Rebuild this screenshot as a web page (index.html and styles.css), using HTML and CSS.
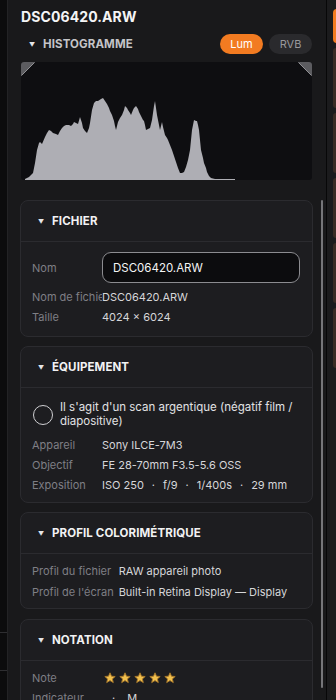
FILE: index.html
```html
<!DOCTYPE html>
<html lang="fr">
<head>
<meta charset="utf-8">
<link rel="stylesheet" href="styles.css">
</head>
<body>
<div class="app">
  <div class="left-strip">
    <div class="ls-line ls-line-a"></div>
    <div class="ls-line ls-line-b"></div>
  </div>
  <main class="panel">
    <h1 class="title">DSC06420.ARW</h1>
    <div class="hist-head">
      <span class="caret">▼</span>
      <span class="hist-label">HISTOGRAMME</span>
      <div class="seg">
        <button class="seg-btn active">Lum</button>
        <button class="seg-btn">RVB</button>
      </div>
    </div>
    <div class="hist">
      <svg class="hist-svg" width="291" height="118" viewBox="21 62 291 118">
        <polygon fill="#aeaeb4" points="25,179 29,177 33,173 35,163 37,150 39,143 40,142 42,144 45,137 47,133 49,130 51,131 53,133 56,134 58,135 60,131 62,128 64,126 66,125 69,125 71,126 73,124 74,122 76,123 78,124 80,117 82,123 83,128 85,131 87,133 89,128 90,123 92,110 94,103 96,101 98,101 101,99 103,98 105,101 107,104 109,108 110,111 112,115 114,121 115,126 116,130 117,126 118,122 120,118 122,115 124,110 125,106 127,108 128,110 130,113 131,115 133,110 134,108 136,106 138,109 139,112 141,116 143,120 144,121 145,125 146,130 148,129 150,128 152,120 153,113 154,106 155,101 156,108 157,115 159,125 160,130 161,126 162,122 163,127 165,135 167,138 168,140 170,145 172,150 174,156 176,162 178,168 180,173 182,173 184,172 186,167 188,160 190,150 191,140 192,130 194,120 196,121 197,121 198,125 199,130 200,140 201,150 203,158 204,163 206,168 207,172 209,176 211,178 215,179 235,179 235,180 25,180"/>
        <polygon fill="#5c5c60" points="21,62 35,62 21,76"/>
        <polyline fill="none" stroke="#909094" stroke-width="1" points="21.5,75.5 34.5,62.5"/>
        <polygon fill="#5c5c60" points="298,62 312,62 312,76"/>
        <polyline fill="none" stroke="#909094" stroke-width="1" points="298.5,62.5 311.5,75.5"/>
      </svg>
    </div>

    <section class="card card-first">
      <div class="card-head"><span class="caret">▼</span><span class="card-title">FICHIER</span></div>
      <div class="card-body">
        <div class="row row-input">
          <span class="lbl">Nom</span>
          <div class="input">DSC06420.ARW</div>
        </div>
        <div class="row">
          <span class="lbl">Nom de fichier</span>
          <span class="val">DSC06420.ARW</span>
        </div>
        <div class="row">
          <span class="lbl">Taille</span>
          <span class="val">4024 × 6024</span>
        </div>
      </div>
    </section>

    <section class="card">
      <div class="card-head"><span class="caret">▼</span><span class="card-title">ÉQUIPEMENT</span></div>
      <div class="card-body body-equip">
        <div class="check-row">
          <span class="check"></span>
          <span class="check-text">Il s'agit d'un scan argentique (négatif film / diapositive)</span>
        </div>
        <div class="row">
          <span class="lbl">Appareil</span>
          <span class="val">Sony ILCE-7M3</span>
        </div>
        <div class="row">
          <span class="lbl">Objectif</span>
          <span class="val">FE 28-70mm F3.5-5.6 OSS</span>
        </div>
        <div class="row">
          <span class="lbl">Exposition</span>
          <span class="val exp"><span>ISO 250</span><span>·</span><span>f/9</span><span>·</span><span>1/400s</span><span>·</span><span>29 mm</span></span>
        </div>
      </div>
    </section>

    <section class="card">
      <div class="card-head"><span class="caret">▼</span><span class="card-title">PROFIL COLORIMÉTRIQUE</span></div>
      <div class="card-body grid-body">
        <span class="lbl2">Profil du fichier</span>
        <span class="val">RAW appareil photo</span>
        <span class="lbl2">Profil de l'écran</span>
        <span class="val">Built-in Retina Display — Display</span>
      </div>
    </section>

    <section class="card card-last">
      <div class="card-head"><span class="caret">▼</span><span class="card-title">NOTATION</span></div>
      <div class="card-body body-rating">
        <div class="row">
          <span class="lbl">Note</span>
          <span class="stars">
            <svg class="star" width="12" height="12" viewBox="0 0 12 12"><path d="M6 0.8 L7.5 4.2 L11.2 4.5 L8.4 6.9 L9.3 10.6 L6 8.6 L2.7 10.6 L3.6 6.9 L0.8 4.5 L4.5 4.2 Z"/></svg>
            <svg class="star" width="12" height="12" viewBox="0 0 12 12"><path d="M6 0.8 L7.5 4.2 L11.2 4.5 L8.4 6.9 L9.3 10.6 L6 8.6 L2.7 10.6 L3.6 6.9 L0.8 4.5 L4.5 4.2 Z"/></svg>
            <svg class="star" width="12" height="12" viewBox="0 0 12 12"><path d="M6 0.8 L7.5 4.2 L11.2 4.5 L8.4 6.9 L9.3 10.6 L6 8.6 L2.7 10.6 L3.6 6.9 L0.8 4.5 L4.5 4.2 Z"/></svg>
            <svg class="star" width="12" height="12" viewBox="0 0 12 12"><path d="M6 0.8 L7.5 4.2 L11.2 4.5 L8.4 6.9 L9.3 10.6 L6 8.6 L2.7 10.6 L3.6 6.9 L0.8 4.5 L4.5 4.2 Z"/></svg>
            <svg class="star" width="12" height="12" viewBox="0 0 12 12"><path d="M6 0.8 L7.5 4.2 L11.2 4.5 L8.4 6.9 L9.3 10.6 L6 8.6 L2.7 10.6 L3.6 6.9 L0.8 4.5 L4.5 4.2 Z"/></svg>
          </span>
        </div>
        <div class="row">
          <span class="lbl">Indicateur</span>
          <span class="val ind"><span>·</span><span>M</span></span>
        </div>
      </div>
    </section>

    <div class="scrollbar"></div>
  </main>
  <div class="divider"></div>
  <aside class="right-strip">
    <div class="rs-btn"></div>
    <div class="rs-thumb"></div>
    <div class="rs-thumb"></div>
    <div class="rs-thumb"></div>
    <div class="rs-thumb"></div>
    <div class="rs-thumb"></div>
  </aside>
</div>
</body>
</html>
```

FILE: styles.css
```css
* { box-sizing: border-box; }
html, body {
  margin: 0;
  padding: 0;
  height: 700px;
  overflow: hidden;
  background: #19191b;
  font-family: Inter, "Noto Sans", "DejaVu Sans", sans-serif;
}
.app {
  display: flex;
  height: 700px;
}
.left-strip {
  width: 8px;
  flex: none;
  background: #0c0c0d;
  border-right: 1px solid #232325;
  position: relative;
}
.ls-line {
  position: absolute;
  left: 0;
  width: 7px;
  height: 1px;
  background: #2e2e31;
}
.ls-line-a { top: 632px; }
.ls-line-b { top: 670px; }

.panel {
  width: 318px;
  flex: none;
  position: relative;
  padding: 8px 13px 0 12px;
  background: #19191b;
  overflow: hidden;
}
.title {
  margin: 0 0 0 1px;
  font-size: 14px;
  line-height: 18px;
  font-weight: 700;
  color: #f4f4f5;
  letter-spacing: 0.1px;
}
.hist-head {
  display: flex;
  align-items: center;
  height: 20px;
  margin-top: 8px;
  padding-left: 9px;
}
.caret {
  font-size: 6px;
  color: #e6e6e8;
  width: 14px;
  flex: none;
}
.hist-label {
  font-size: 11.5px;
  font-weight: 700;
  color: #c4c4c8;
  letter-spacing: 0.1px;
}
.seg {
  margin-left: auto;
  display: flex;
  gap: 6px;
  margin-right: 1px;
}
.seg-btn {
  border: none;
  height: 20px;
  border-radius: 10px;
  font-family: inherit;
  font-size: 11px;
  padding: 0;
  width: 43px;
  background: #2a2a2d;
  color: #98989c;
}
.seg-btn.active {
  background: #f27b21;
  color: #ffffff;
}
.hist {
  margin: 8px 0 0 1px;
  width: 291px;
  height: 118px;
  background: #0e0e11;
  border-radius: 3px;
  overflow: hidden;
}
.hist-svg { display: block; }

.card {
  width: 293px;
  background: #1d1d20;
  border: 1px solid #2b2b2f;
  border-radius: 8px;
  margin-top: 9px;
}
.card-first { margin-top: 20px; }
.card-last { margin-top: 10px; }
.card-head {
  height: 41px;
  display: flex;
  align-items: center;
  padding-left: 17px;
  border-bottom: 1px solid #2b2b2f;
}
.card-head .caret { width: 14px; }
.card-title {
  font-size: 11.5px;
  font-weight: 700;
  color: #f2f2f3;
  letter-spacing: 0.1px;
}
.card-body {
  padding: 10px 12px 9px 11px;
}
.body-equip {
  padding-top: 11px;
  padding-bottom: 7px;
}
.body-rating {
  padding-top: 7px;
}
.row {
  display: flex;
  align-items: center;
  height: 20px;
  font-size: 11px;
}
.row-input {
  height: 31px;
  margin-bottom: 4px;
}
.lbl {
  width: 70px;
  flex: none;
  white-space: nowrap;
  overflow: hidden;
  color: #7f7f85;
}
.val {
  color: #d6d6d9;
  white-space: nowrap;
}
.input {
  width: 198px;
  height: 31px;
  border: 1px solid #8c8c90;
  border-radius: 9px;
  background: #0c0c0e;
  color: #f4f4f5;
  font-size: 11.5px;
  display: flex;
  align-items: center;
  padding-left: 10px;
}
.check-row {
  display: flex;
  align-items: center;
  gap: 7px;
  padding: 2px 0 0 1px;
  margin-bottom: 7px;
}
.check {
  width: 20px;
  height: 20px;
  border-radius: 50%;
  border: 1.5px solid #cfcfd2;
  flex: none;
}
.check-text {
  font-size: 11.5px;
  line-height: 13.5px;
  color: #e2e2e4;
}
.exp { display: flex; gap: 8px; }
.ind { display: flex; gap: 12px; padding-left: 10px; }
.grid-body {
  display: grid;
  grid-template-columns: auto 1fr;
  column-gap: 5px;
  row-gap: 0;
  font-size: 11px;
  line-height: 20.5px;
  padding-top: 7px;
  padding-bottom: 6px;
}
.lbl2 {
  color: #7f7f85;
  white-space: nowrap;
}
.stars {
  display: flex;
  gap: 3px;
  padding-left: 2px;
}
.star path {
  fill: #f1c04e;
  stroke: #a8782a;
  stroke-width: 0.9;
  stroke-linejoin: round;
}
.scrollbar {
  position: absolute;
  left: 313px;
  top: 200px;
  width: 2px;
  height: 488px;
  background: #76767a;
  border-radius: 1px;
}
.divider {
  width: 1px;
  flex: none;
  background: #070708;
}
.right-strip {
  flex: 1;
  background: #1b1b1d;
  padding: 9px 0 0 6px;
  display: flex;
  flex-direction: column;
  gap: 5px;
}
.rs-btn {
  height: 34px;
  width: 10px;
  border-radius: 4px;
  background: #f27b21;
}
.rs-thumb {
  height: 60px;
  width: 10px;
  border-radius: 3px;
  background: #3a2c25;
}
```
